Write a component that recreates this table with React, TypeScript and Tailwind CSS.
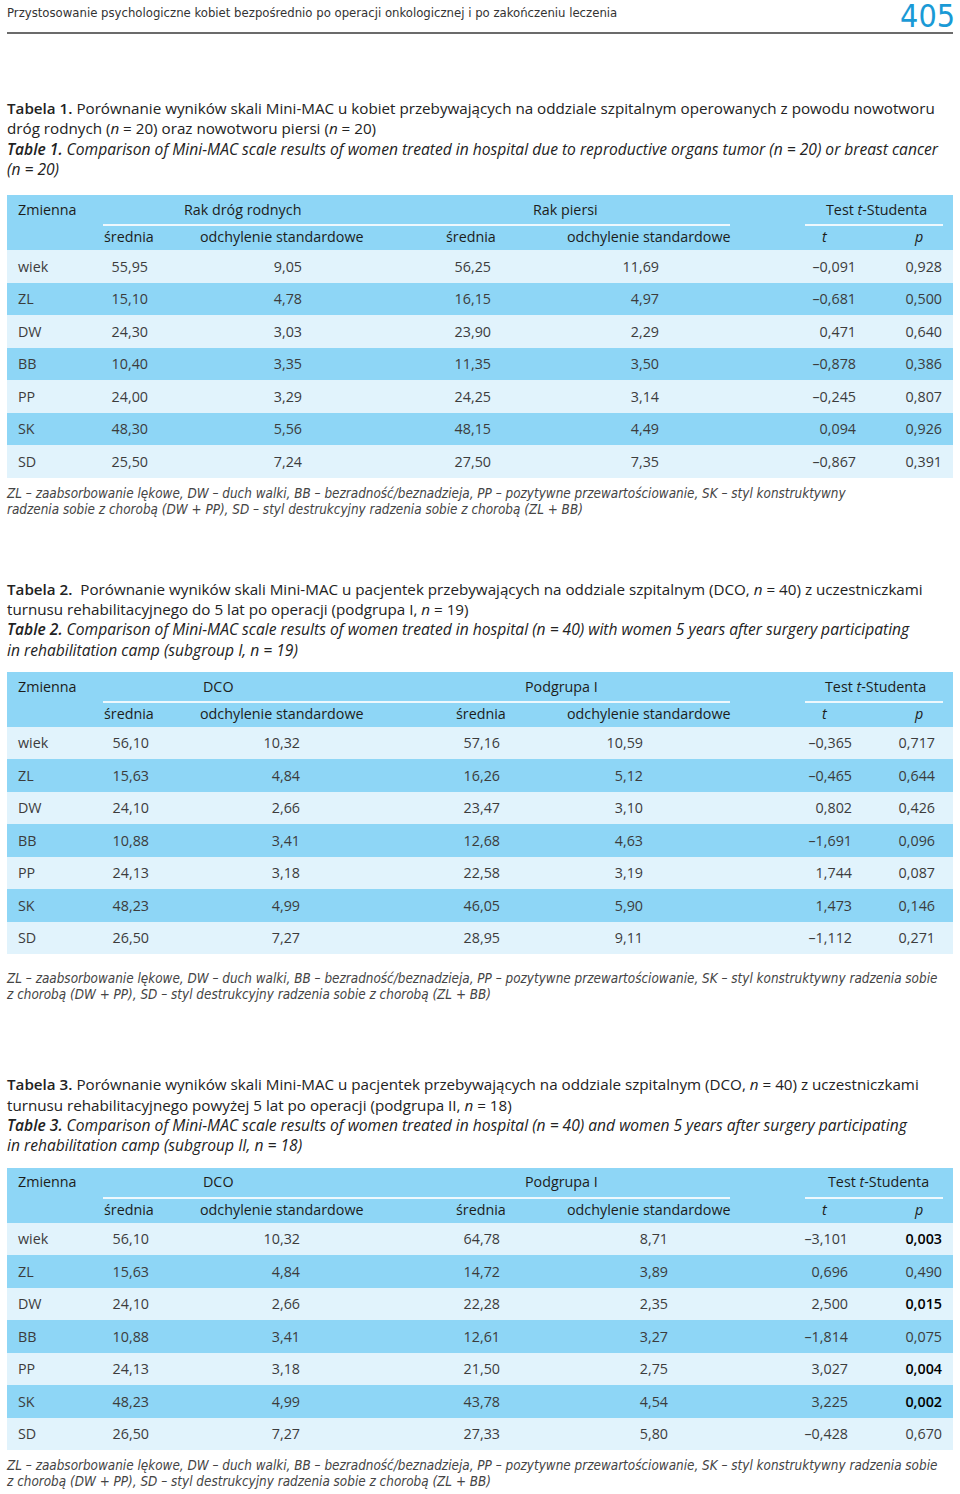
import React from 'react'

type Row = [string, string, string, string, string, string, string, boolean?]

const TABLE_1: Row[] = [
  ['wiek', '55,95', '9,05', '56,25', '11,69', '–0,091', '0,928'],
  ['ZL', '15,10', '4,78', '16,15', '4,97', '–0,681', '0,500'],
  ['DW', '24,30', '3,03', '23,90', '2,29', '0,471', '0,640'],
  ['BB', '10,40', '3,35', '11,35', '3,50', '–0,878', '0,386'],
  ['PP', '24,00', '3,29', '24,25', '3,14', '–0,245', '0,807'],
  ['SK', '48,30', '5,56', '48,15', '4,49', '0,094', '0,926'],
  ['SD', '25,50', '7,24', '27,50', '7,35', '–0,867', '0,391'],
]

const TABLE_2: Row[] = [
  ['wiek', '56,10', '10,32', '57,16', '10,59', '–0,365', '0,717'],
  ['ZL', '15,63', '4,84', '16,26', '5,12', '–0,465', '0,644'],
  ['DW', '24,10', '2,66', '23,47', '3,10', '0,802', '0,426'],
  ['BB', '10,88', '3,41', '12,68', '4,63', '–1,691', '0,096'],
  ['PP', '24,13', '3,18', '22,58', '3,19', '1,744', '0,087'],
  ['SK', '48,23', '4,99', '46,05', '5,90', '1,473', '0,146'],
  ['SD', '26,50', '7,27', '28,95', '9,11', '–1,112', '0,271'],
]

const TABLE_3: Row[] = [
  ['wiek', '56,10', '10,32', '64,78', '8,71', '–3,101', '0,003', true],
  ['ZL', '15,63', '4,84', '14,72', '3,89', '0,696', '0,490'],
  ['DW', '24,10', '2,66', '22,28', '2,35', '2,500', '0,015', true],
  ['BB', '10,88', '3,41', '12,61', '3,27', '–1,814', '0,075'],
  ['PP', '24,13', '3,18', '21,50', '2,75', '3,027', '0,004', true],
  ['SK', '48,23', '4,99', '43,78', '4,54', '3,225', '0,002', true],
  ['SD', '26,50', '7,27', '27,33', '5,80', '–0,428', '0,670'],
]

const narrow = "font-['DejaVu_Sans_Condensed',sans-serif]"

type Layout = { head: string; sub: string; body: string }

const L1: Layout = {
  head: 'grid-cols-[177px_349px_293px_1fr]',
  sub: 'grid-cols-[97px_96px_246px_121px_255px_93px_1fr]',
  body: 'grid-cols-[73px_68px_154px_189px_168px_197px_86px]',
}
const L2: Layout = {
  head: 'grid-cols-[196px_322px_300px_1fr]',
  sub: 'grid-cols-[97px_96px_256px_111px_255px_93px_1fr]',
  body: 'grid-cols-[73px_69px_151px_200px_143px_209px_83px]',
}
const L3: Layout = {
  head: 'grid-cols-[196px_322px_303px_1fr]',
  sub: 'grid-cols-[97px_96px_256px_111px_255px_93px_1fr]',
  body: 'grid-cols-[73px_69px_151px_200px_168px_180px_94px]',
}

function StatTable({ layout, groupA, groupB, rows }: { layout: Layout; groupA: string; groupB: string; rows: Row[] }) {
  return (
    <div className="text-[14.3px]">
      {/* nagłówek */}
      <div className="bg-[#8ed6f6] h-[55px] text-[#1d1d1b]">
        <div className={`grid ${layout.head} h-[29px] items-center`}>
          <span className="pl-[11px]">Zmienna</span>
          <span>{groupA}</span>
          <span>{groupB}</span>
          <span>Test <i>t</i>-Studenta</span>
        </div>
        <div className="flex h-[2px]">
          <div className="ml-[96px] w-[627px] bg-[#eef8fd]" />
          <div className="ml-[75px] w-[138px] bg-[#eef8fd]" />
        </div>
        <div className={`grid ${layout.sub} h-[20px] items-center`}>
          <span />
          <span>średnia</span>
          <span>odchylenie standardowe</span>
          <span>średnia</span>
          <span>odchylenie standardowe</span>
          <span className="italic">t</span>
          <span className="italic">p</span>
        </div>
      </div>
      {/* wiersze */}
      {rows.map((r, i) => (
        <div
          key={r[0]}
          className={`grid ${layout.body} h-[32.5px] items-center text-[#3c3c3c] ${i % 2 === 0 ? 'bg-[#e1f3fc]' : 'bg-[#8ed6f6]'}`}
        >
          <span className="pl-[11px]">{r[0]}</span>
          <span className="text-right">{r[1]}</span>
          <span className="text-right">{r[2]}</span>
          <span className="text-right">{r[3]}</span>
          <span className="text-right">{r[4]}</span>
          <span className="text-right">{r[5]}</span>
          <span className={`text-right ${r[7] ? 'font-semibold text-black' : ''}`}>{r[6]}</span>
        </div>
      ))}
    </div>
  )
}

function Footnote({ wrapEarly }: { wrapEarly: boolean }) {
  return (
    <p className={`${narrow} italic text-[13.4px] leading-[16px] text-[#444] whitespace-nowrap`}>
      ZL – zaabsorbowanie lękowe, DW – duch walki, BB – bezradność/beznadzieja, PP – pozytywne przewartościowanie, SK – styl konstruktywny
      {wrapEarly ? <br /> : ' '}
      radzenia sobie{wrapEarly ? ' ' : <br />}z chorobą (DW + PP), SD – styl destrukcyjny radzenia sobie z chorobą (ZL + BB)
    </p>
  )
}

export default function App() {
  return (
    <div className="w-[960px] min-h-[1494px] bg-white px-[7px] font-['Open_Sans',sans-serif] text-[#222]">
      {/* nagłówek strony */}
      <div className="flex items-start justify-between h-[31px]">
        <span className={`${narrow} text-[13px] leading-[16px] text-[#333] mt-[5px]`}>
          Przystosowanie psychologiczne kobiet bezpośrednio po operacji onkologicznej i po zakończeniu leczenia
        </span>
        <span className={`${narrow} text-[32px] leading-[32px] text-[#1a9ad6] -mr-[2px]`}>405</span>
      </div>
      <div className="h-[2px] bg-[#6b6b6b] mt-[1px]" />

      {/* Tabela 1 */}
      <p className="mt-[64px] text-[15.2px] leading-[20.3px] whitespace-nowrap">
        <b className="font-semibold">Tabela 1.</b> Porównanie wyników skali Mini-MAC u kobiet przebywających na oddziale szpitalnym operowanych z powodu nowotworu
        <br />
        dróg rodnych (<i>n</i> = 20) oraz nowotworu piersi (<i>n</i> = 20)
        <br />
        <i className="text-[15.6px]">
          <b className="font-semibold">Table 1.</b> Comparison of Mini-MAC scale results of women treated in hospital due to reproductive organs tumor (n = 20) or breast cancer
          <br />
          (n = 20)
        </i>
      </p>
      <div className="mt-[16px]">
        <StatTable layout={L1} groupA="Rak dróg rodnych" groupB="Rak piersi" rows={TABLE_1} />
      </div>
      <div className="mt-[8px]">
        <Footnote wrapEarly />
      </div>

      {/* Tabela 2 */}
      <p className="mt-[61px] text-[15.2px] leading-[20.3px] whitespace-nowrap">
        <b className="font-semibold">Tabela 2.</b>&nbsp; Porównanie wyników skali Mini-MAC u pacjentek przebywających na oddziale szpitalnym (DCO, <i>n</i> = 40) z uczestniczkami
        <br />
        turnusu rehabilitacyjnego do 5 lat po operacji (podgrupa I, <i>n</i> = 19)
        <br />
        <i className="text-[15.6px]">
          <b className="font-semibold">Table 2.</b> Comparison of Mini-MAC scale results of women treated in hospital (n = 40) with women 5 years after surgery participating
          <br />
          in rehabilitation camp (subgroup I, n = 19)
        </i>
      </p>
      <div className="mt-[12px]">
        <StatTable layout={L2} groupA="DCO" groupB="Podgrupa I" rows={TABLE_2} />
      </div>
      <div className="mt-[17px]">
        <Footnote wrapEarly={false} />
      </div>

      {/* Tabela 3 */}
      <p className="mt-[71px] text-[15.2px] leading-[20.3px] whitespace-nowrap">
        <b className="font-semibold">Tabela 3.</b> Porównanie wyników skali Mini-MAC u pacjentek przebywających na oddziale szpitalnym (DCO, <i>n</i> = 40) z uczestniczkami
        <br />
        turnusu rehabilitacyjnego powyżej 5 lat po operacji (podgrupa II, <i>n</i> = 18)
        <br />
        <i className="text-[15.6px]">
          <b className="font-semibold">Table 3.</b> Comparison of Mini-MAC scale results of women treated in hospital (n = 40) and women 5 years after surgery participating
          <br />
          in rehabilitation camp (subgroup II, n = 18)
        </i>
      </p>
      <div className="mt-[12px]">
        <StatTable layout={L3} groupA="DCO" groupB="Podgrupa I" rows={TABLE_3} />
      </div>
      <div className="mt-[8px]">
        <Footnote wrapEarly={false} />
      </div>
    </div>
  )
}
